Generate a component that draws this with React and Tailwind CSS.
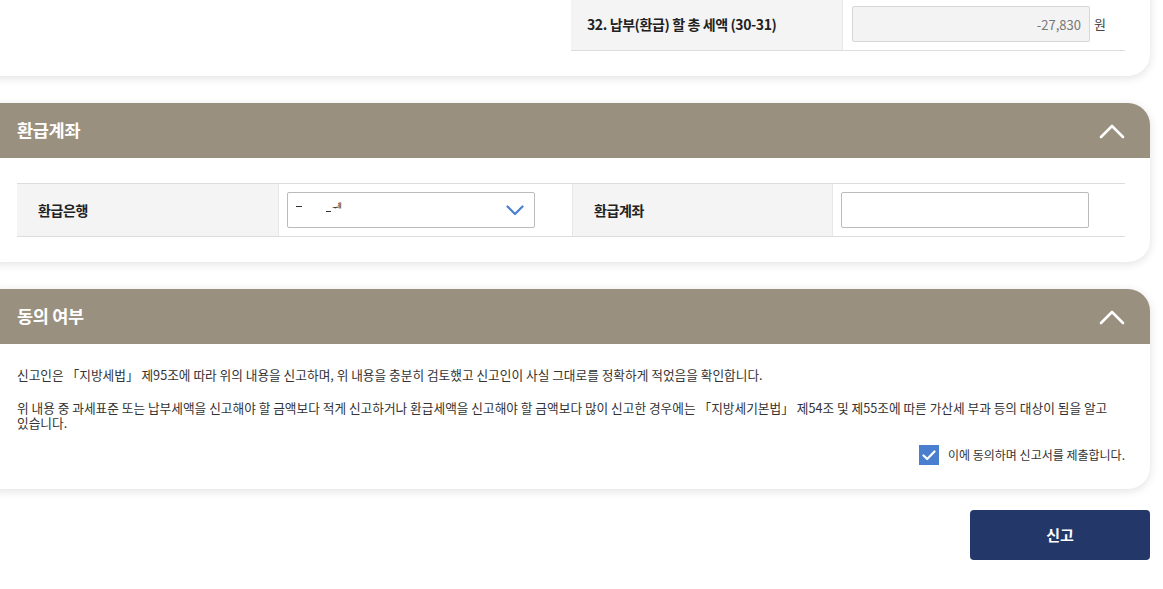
import React, { useState } from "react";

const ChevronUp = () => (
  <svg width="26" height="16" viewBox="0 0 26 16" fill="none">
    <path d="M2 14 L13 3 L24 14" stroke="white" strokeWidth="2.6" strokeLinecap="round" strokeLinejoin="round" />
  </svg>
);

const ChevronDown = () => (
  <svg width="18" height="11" viewBox="0 0 18 11" fill="none">
    <path d="M1.5 1.5 L9 9 L16.5 1.5" stroke="#4a7fd0" strokeWidth="2.2" strokeLinecap="round" strokeLinejoin="round" />
  </svg>
);

const SectionHeader = ({ title }) => (
  <div className="flex items-center justify-between h-[55px] bg-[#9a9080] rounded-t-[22px] pl-[40px] pr-[25px]">
    <h2 className="text-[17.5px] font-bold text-white tracking-[-0.3px]">{title}</h2>
    <ChevronUp />
  </div>
);

const App = () => {
  const [agree, setAgree] = useState(true);
  const [account, setAccount] = useState("");

  return (
    <div
      className="min-h-screen bg-white overflow-hidden text-[#222]"
      style={{ fontFamily: '"Noto Sans CJK KR", "Noto Sans", sans-serif' }}
    >
      <div className="ml-[-23px] w-[1173px] flex flex-col">
        {/* total card */}
        <div className="mt-[-30px] bg-white rounded-b-[22px] shadow-[0_2px_10px_rgba(0,0,0,0.12)] pl-[40px] pr-[25px] pt-[28px] pb-[25px]">
          <div className="flex">
            <div className="w-[554px]" />
            <div className="flex flex-1 h-[53px] border-b border-[#ddd]">
              <div className="w-[272px] bg-[#f4f4f4] flex items-center pl-[16px] text-[14px] font-bold tracking-[-0.4px] border-r border-[#e8e8e8]">
                32. 납부(환급) 할 총 세액 (30-31)
              </div>
              <div className="flex-1 flex items-center pl-[9px] gap-[4px]">
                <input
                  readOnly
                  value="-27,830"
                  className="w-[238px] h-[36px] bg-[#f3f3f3] border border-[#d6d6d6] rounded-[2px] text-right pr-[8px] text-[13px] text-[#777]"
                />
                <span className="text-[13px] text-[#444]">원</span>
              </div>
            </div>
          </div>
        </div>

        {/* refund account */}
        <div className="mt-[27px] bg-white rounded-[22px] shadow-[0_2px_10px_rgba(0,0,0,0.12)]">
          <SectionHeader title="환급계좌" />
          <div className="pl-[40px] pr-[25px] pt-[25px] pb-[25px]">
            <div className="flex h-[54px] border-y border-[#ddd]">
              <div className="w-[262px] bg-[#f4f4f4] flex items-center pl-[21px] text-[14px] font-bold tracking-[-0.4px] border-r border-[#e8e8e8]">
                환급은행
              </div>
              <div className="w-[293px] flex items-center pl-[8px]">
                <div className="relative w-[248px] h-[36px] border border-[#bbb] rounded-[2px] flex items-center justify-between pl-[8px] pr-[10px]">
                  <div className="flex items-center text-[11px] text-[#333] -mt-[6px]">
                    <span className="w-[6px] h-px bg-[#333] mt-[-2px]" />
                    <span className="ml-[24px] w-[5px] h-px bg-[#333] mt-[8px]" />
                    <span className="ml-[1px]">ᆌ</span>
                  </div>
                  <ChevronDown />
                </div>
              </div>
              <div className="w-[261px] bg-[#f4f4f4] flex items-center pl-[21px] text-[14px] font-bold tracking-[-0.4px] border-x border-[#e8e8e8]">
                환급계좌
              </div>
              <div className="flex-1 flex items-center pl-[8px]">
                <input
                  value={account}
                  onChange={(e) => setAccount(e.target.value)}
                  className="w-[248px] h-[36px] border border-[#bbb] rounded-[2px] px-[8px] text-[13px]"
                />
              </div>
            </div>
          </div>
        </div>

        {/* agreement */}
        <div className="mt-[27px] bg-white rounded-[22px] shadow-[0_2px_10px_rgba(0,0,0,0.12)]">
          <SectionHeader title="동의 여부" />
          <div className="pl-[40px] pr-[25px] pt-[23px] pb-[24px] text-[12.7px] text-[#333] tracking-normal leading-[16px] break-keep">
            <p>
              신고인은 「지방세법」 제95조에 따라 위의 내용을 신고하며, 위 내용을 충분히 검토했고 신고인이 사실 그대로를 정확하게 적었음을 확인합니다.
            </p>
            <p className="mt-[17px] leading-[15px]">
              위 내용 중 과세표준 또는 납부세액을 신고해야 할 금액보다 적게 신고하거나 환급세액을 신고해야 할 금액보다 많이 신고한 경우에는 「지방세기본법」 제54조 및 제55조에 따른 가산세 부과 등의 대상이 됨을 알고 있습니다.
            </p>
            <label className="mt-[15px] flex items-center justify-end gap-[9px] cursor-pointer">
              <span
                onClick={() => setAgree(!agree)}
                className={agree ? "w-[20px] h-[20px] bg-[#4a7fd0] flex items-center justify-center" : "w-[20px] h-[20px] border border-[#aaa] bg-white"}
              >
                {agree && (
                  <svg width="14" height="11" viewBox="0 0 14 11" fill="none">
                    <path d="M1.5 5.5 L5.2 9 L12.5 1.5" stroke="white" strokeWidth="2.2" strokeLinecap="round" strokeLinejoin="round" />
                  </svg>
                )}
              </span>
              <span className="text-[12px]">이에 동의하며 신고서를 제출합니다.</span>
            </label>
          </div>
        </div>

        <div className="flex justify-end mt-[21px]">
          <button className="w-[180px] h-[50px] bg-[#233869] text-white text-[15px] font-bold rounded-[4px]">
            신고
          </button>
        </div>
      </div>
    </div>
  );
};

export default App;
